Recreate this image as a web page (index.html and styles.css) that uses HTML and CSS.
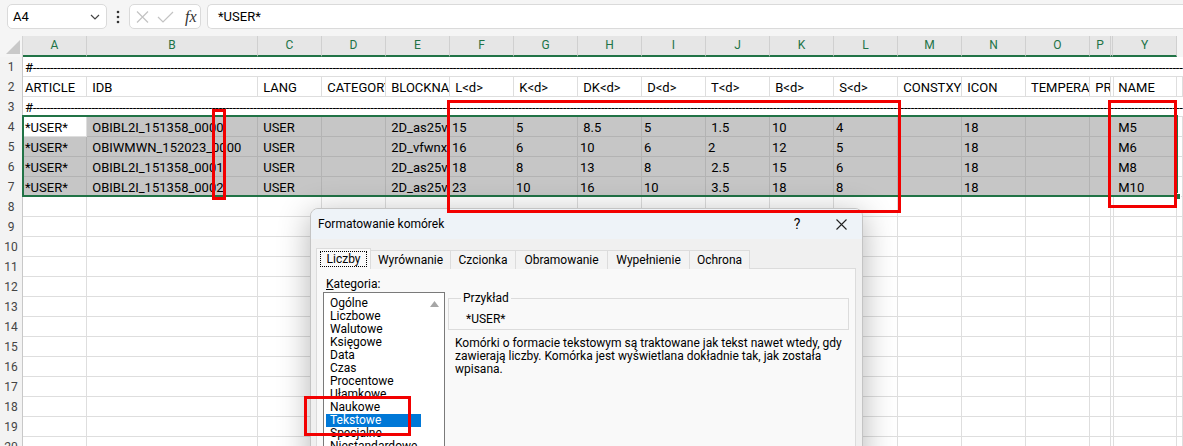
FILE: index.html
```html
<!DOCTYPE html>
<html lang="pl">
<head>
<meta charset="utf-8">
<title>Excel – Formatowanie komórek</title>
<link rel="stylesheet" href="styles.css">
</head>
<body>
<div class="app">
  <div class="fbar">
    <div class="namebox"><span>A4</span>
      <svg class="chev" width="10" height="6" viewBox="0 0 10 6"><polyline points="1,1 5,5 9,1" fill="none" stroke="#444" stroke-width="1.2"/></svg>
    </div>
    <div class="vdots"><svg width="4" height="14" viewBox="0 0 4 14"><circle cx="2" cy="2" r="1.3" fill="#333"/><circle cx="2" cy="7" r="1.3" fill="#333"/><circle cx="2" cy="12" r="1.3" fill="#333"/></svg></div>
    <div class="fxbox">
      <svg width="13" height="12" viewBox="0 0 13 12"><path d="M1 0.5 L12 11.5 M12 0.5 L1 11.5" stroke="#c3c3c3" stroke-width="1.2" fill="none"/></svg>
      <svg width="17" height="12" viewBox="0 0 17 12"><polyline points="1,6 6,11 16,1" stroke="#c3c3c3" stroke-width="1.2" fill="none"/></svg>
      <span class="fx">fx</span>
    </div>
    <div class="finput">*USER*</div>
  </div>

  <div class="sheet">
    <div class="row hdr">
      <div class="corner"><svg width="14" height="14" viewBox="0 0 14 14"><polygon points="14,0 14,14 0,14" fill="#c9c9c9"/></svg></div>
      <div class="ch">A</div><div class="ch">B</div><div class="ch">C</div><div class="ch">D</div><div class="ch">E</div><div class="ch">F</div><div class="ch">G</div><div class="ch">H</div><div class="ch">I</div><div class="ch">J</div><div class="ch">K</div><div class="ch">L</div><div class="ch">M</div><div class="ch">N</div><div class="ch">O</div><div class="ch">P</div><div class="ch gap"></div><div class="ch">Y</div><div class="ch rest"></div>
    </div>

    <div class="row"><div class="rh">1</div><div class="c span">#------------------------------------------------------------------------------------------------------------------------------------------------------------------------------------------------------------------------------------------------------------------------------------------------------------------------------------------------------------------------------------------------------------</div></div>

    <div class="row"><div class="rh">2</div><div class="c">ARTICLE</div><div class="c"> IDB</div><div class="c"> LANG</div><div class="c"> CATEGORY</div><div class="c"> BLOCKNAME</div><div class="c"> L&lt;d&gt;</div><div class="c"> K&lt;d&gt;</div><div class="c"> DK&lt;d&gt;</div><div class="c"> D&lt;d&gt;</div><div class="c"> T&lt;d&gt;</div><div class="c"> B&lt;d&gt;</div><div class="c"> S&lt;d&gt;</div><div class="c"> CONSTXYZ</div><div class="c"> ICON</div><div class="c"> TEMPERATURE</div><div class="c"> PRIORITY</div><div class="c gap"></div><div class="c"> NAME</div><div class="c"></div></div>

    <div class="row"><div class="rh">3</div><div class="c span">#------------------------------------------------------------------------------------------------------------------------------------------------------------------------------------------------------------------------------------------------------------------------------------------------------------------------------------------------------------------------------------------------------------</div></div>

    <div class="row"><div class="rh">4</div><div class="c">*USER*</div><div class="c s"> OBIBL2I_151358_0000</div><div class="c s"> USER</div><div class="c s"></div><div class="c s"> 2D_as25vx</div><div class="c s">15</div><div class="c s">5</div><div class="c s"> 8.5</div><div class="c s">5</div><div class="c s"> 1.5</div><div class="c s">10</div><div class="c s">4</div><div class="c s"></div><div class="c s">18</div><div class="c s"></div><div class="c s"></div><div class="c s gap"></div><div class="c s"> M5</div><div class="c"></div></div>

    <div class="row"><div class="rh">5</div><div class="c s">*USER*</div><div class="c s"> OBIWMWN_152023_0000</div><div class="c s"> USER</div><div class="c s"></div><div class="c s"> 2D_vfwnxq</div><div class="c s">16</div><div class="c s">6</div><div class="c s">10</div><div class="c s">6</div><div class="c s">2</div><div class="c s">12</div><div class="c s">5</div><div class="c s"></div><div class="c s">18</div><div class="c s"></div><div class="c s"></div><div class="c s gap"></div><div class="c s"> M6</div><div class="c"></div></div>

    <div class="row"><div class="rh">6</div><div class="c s">*USER*</div><div class="c s"> OBIBL2I_151358_0001</div><div class="c s"> USER</div><div class="c s"></div><div class="c s"> 2D_as25vx</div><div class="c s">18</div><div class="c s">8</div><div class="c s">13</div><div class="c s">8</div><div class="c s"> 2.5</div><div class="c s">15</div><div class="c s">6</div><div class="c s"></div><div class="c s">18</div><div class="c s"></div><div class="c s"></div><div class="c s gap"></div><div class="c s"> M8</div><div class="c"></div></div>

    <div class="row"><div class="rh">7</div><div class="c s">*USER*</div><div class="c s"> OBIBL2I_151358_0002</div><div class="c s"> USER</div><div class="c s"></div><div class="c s"> 2D_as25vx</div><div class="c s">23</div><div class="c s">10</div><div class="c s">16</div><div class="c s">10</div><div class="c s"> 3.5</div><div class="c s">18</div><div class="c s">8</div><div class="c s"></div><div class="c s">18</div><div class="c s"></div><div class="c s"></div><div class="c s gap"></div><div class="c s"> M10</div><div class="c"></div></div>

    <div class="row"><div class="rh">8</div><div class="c"></div><div class="c"></div><div class="c"></div><div class="c"></div><div class="c"></div><div class="c"></div><div class="c"></div><div class="c"></div><div class="c"></div><div class="c"></div><div class="c"></div><div class="c"></div><div class="c"></div><div class="c"></div><div class="c"></div><div class="c"></div><div class="c gap"></div><div class="c"></div><div class="c"></div></div>
    <div class="row"><div class="rh">9</div><div class="c"></div><div class="c"></div><div class="c"></div><div class="c"></div><div class="c"></div><div class="c"></div><div class="c"></div><div class="c"></div><div class="c"></div><div class="c"></div><div class="c"></div><div class="c"></div><div class="c"></div><div class="c"></div><div class="c"></div><div class="c"></div><div class="c gap"></div><div class="c"></div><div class="c"></div></div>
    <div class="row"><div class="rh">10</div><div class="c"></div><div class="c"></div><div class="c"></div><div class="c"></div><div class="c"></div><div class="c"></div><div class="c"></div><div class="c"></div><div class="c"></div><div class="c"></div><div class="c"></div><div class="c"></div><div class="c"></div><div class="c"></div><div class="c"></div><div class="c"></div><div class="c gap"></div><div class="c"></div><div class="c"></div></div>
    <div class="row"><div class="rh">11</div><div class="c"></div><div class="c"></div><div class="c"></div><div class="c"></div><div class="c"></div><div class="c"></div><div class="c"></div><div class="c"></div><div class="c"></div><div class="c"></div><div class="c"></div><div class="c"></div><div class="c"></div><div class="c"></div><div class="c"></div><div class="c"></div><div class="c gap"></div><div class="c"></div><div class="c"></div></div>
    <div class="row"><div class="rh">12</div><div class="c"></div><div class="c"></div><div class="c"></div><div class="c"></div><div class="c"></div><div class="c"></div><div class="c"></div><div class="c"></div><div class="c"></div><div class="c"></div><div class="c"></div><div class="c"></div><div class="c"></div><div class="c"></div><div class="c"></div><div class="c"></div><div class="c gap"></div><div class="c"></div><div class="c"></div></div>
    <div class="row"><div class="rh">13</div><div class="c"></div><div class="c"></div><div class="c"></div><div class="c"></div><div class="c"></div><div class="c"></div><div class="c"></div><div class="c"></div><div class="c"></div><div class="c"></div><div class="c"></div><div class="c"></div><div class="c"></div><div class="c"></div><div class="c"></div><div class="c"></div><div class="c gap"></div><div class="c"></div><div class="c"></div></div>
    <div class="row"><div class="rh">14</div><div class="c"></div><div class="c"></div><div class="c"></div><div class="c"></div><div class="c"></div><div class="c"></div><div class="c"></div><div class="c"></div><div class="c"></div><div class="c"></div><div class="c"></div><div class="c"></div><div class="c"></div><div class="c"></div><div class="c"></div><div class="c"></div><div class="c gap"></div><div class="c"></div><div class="c"></div></div>
    <div class="row"><div class="rh">15</div><div class="c"></div><div class="c"></div><div class="c"></div><div class="c"></div><div class="c"></div><div class="c"></div><div class="c"></div><div class="c"></div><div class="c"></div><div class="c"></div><div class="c"></div><div class="c"></div><div class="c"></div><div class="c"></div><div class="c"></div><div class="c"></div><div class="c gap"></div><div class="c"></div><div class="c"></div></div>
    <div class="row"><div class="rh">16</div><div class="c"></div><div class="c"></div><div class="c"></div><div class="c"></div><div class="c"></div><div class="c"></div><div class="c"></div><div class="c"></div><div class="c"></div><div class="c"></div><div class="c"></div><div class="c"></div><div class="c"></div><div class="c"></div><div class="c"></div><div class="c"></div><div class="c gap"></div><div class="c"></div><div class="c"></div></div>
    <div class="row"><div class="rh">17</div><div class="c"></div><div class="c"></div><div class="c"></div><div class="c"></div><div class="c"></div><div class="c"></div><div class="c"></div><div class="c"></div><div class="c"></div><div class="c"></div><div class="c"></div><div class="c"></div><div class="c"></div><div class="c"></div><div class="c"></div><div class="c"></div><div class="c gap"></div><div class="c"></div><div class="c"></div></div>
    <div class="row"><div class="rh">18</div><div class="c"></div><div class="c"></div><div class="c"></div><div class="c"></div><div class="c"></div><div class="c"></div><div class="c"></div><div class="c"></div><div class="c"></div><div class="c"></div><div class="c"></div><div class="c"></div><div class="c"></div><div class="c"></div><div class="c"></div><div class="c"></div><div class="c gap"></div><div class="c"></div><div class="c"></div></div>
    <div class="row"><div class="rh">19</div><div class="c"></div><div class="c"></div><div class="c"></div><div class="c"></div><div class="c"></div><div class="c"></div><div class="c"></div><div class="c"></div><div class="c"></div><div class="c"></div><div class="c"></div><div class="c"></div><div class="c"></div><div class="c"></div><div class="c"></div><div class="c"></div><div class="c gap"></div><div class="c"></div><div class="c"></div></div>
    <div class="row"><div class="rh">20</div><div class="c"></div><div class="c"></div><div class="c"></div><div class="c"></div><div class="c"></div><div class="c"></div><div class="c"></div><div class="c"></div><div class="c"></div><div class="c"></div><div class="c"></div><div class="c"></div><div class="c"></div><div class="c"></div><div class="c"></div><div class="c"></div><div class="c gap"></div><div class="c"></div><div class="c"></div></div>
  </div>

  <div class="selection"><div class="handle"></div></div>

  <div class="dialog">
    <div class="dtitle"><span class="dname">Formatowanie komórek</span><span class="help">?</span>
      <svg class="close" width="11" height="11" viewBox="0 0 11 11"><path d="M0.5 0.5 L10.5 10.5 M10.5 0.5 L0.5 10.5" stroke="#222" stroke-width="1.1" fill="none"/></svg>
    </div>
    <div class="tabs">
      <div class="tab active t1"><span class="focus">Liczby</span></div>
      <div class="tab t2">Wyrównanie</div>
      <div class="tab t3">Czcionka</div>
      <div class="tab t4">Obramowanie</div>
      <div class="tab t5">Wypełnienie</div>
      <div class="tab t6">Ochrona</div>
    </div>
    <div class="panel">
      <div class="leftcol">
        <div class="klabel"><u>K</u>ategoria:</div>
        <div class="listbox">
          <div class="items">
            <div class="item">Ogólne</div>
            <div class="item">Liczbowe</div>
            <div class="item">Walutowe</div>
            <div class="item">Księgowe</div>
            <div class="item">Data</div>
            <div class="item">Czas</div>
            <div class="item">Procentowe</div>
            <div class="item">Ułamkowe</div>
            <div class="item">Naukowe</div>
            <div class="item sel">Tekstowe</div>
            <div class="item">Specjalne</div>
            <div class="item">Niestandardowe</div>
          </div>
          <div class="scroll"><svg width="9" height="6" viewBox="0 0 9 6"><polygon points="4.5,0 9,6 0,6" fill="#a6a6a6"/></svg></div>
        </div>
      </div>
      <div class="rightcol">
        <fieldset class="sample">
          <legend>Przykład</legend>
          <div class="sampletext">*USER*</div>
        </fieldset>
        <p class="desc">Komórki o formacie tekstowym są traktowane jak tekst nawet wtedy, gdy zawierają liczby. Komórka jest wyświetlana dokładnie tak, jak została wpisana.</p>
      </div>
    </div>
  </div>

  <div class="mark m1"></div>
  <div class="mark m2"></div>
  <div class="mark m3"></div>
  <div class="mark m4"></div>
</div>
</body>
</html>
```
FILE: styles.css
```css
* { box-sizing: border-box; }
html, body { margin: 0; padding: 0; overflow: hidden; }
body { width: 1183px; height: 446px; background: #fff; font-family: Roboto, "Liberation Sans", sans-serif; color: #000; }
.app { position: relative; width: 1183px; height: 446px; overflow: hidden; }

/* formula bar */
.fbar { height: 36px; background: #f5f5f5; display: flex; align-items: flex-start; padding: 4px 0 0 7px; }
.namebox { width: 100px; height: 25px; background: #fff; border: 1px solid #dadada; border-radius: 5px; display: flex; align-items: center; justify-content: space-between; padding: 0 6px 0 5px; font-size: 13px; }
.vdots { width: 22px; height: 25px; display: flex; align-items: center; justify-content: center; }
.fxbox { width: 72px; height: 25px; background: #fff; border: 1px solid #dadada; border-radius: 5px; display: flex; align-items: center; padding: 0 0 0 6px; gap: 8px; margin-right: 6px; }
.fx { font-family: "Liberation Serif", serif; font-style: italic; font-size: 16px; color: #333; margin-left: 3px; }
.finput { flex: 1; height: 25px; background: #fff; border: 1px solid #dadada; border-right: none; border-radius: 5px 0 0 5px; padding-left: 10px; font-size: 13px; line-height: 23px; }

/* sheet */
.sheet { --cols: 23px 64px 171px 64px 64px 64px 64px 64px 64px 64px 64px 64px 64px 64px 64px 64px 21px 2px 64px 1fr; }
.row { display: grid; grid-template-columns: var(--cols); height: 20px; }
.row.hdr { height: 21px; background: #f5f5f5; }
.corner { display: flex; align-items: flex-end; justify-content: flex-end; padding: 0 2px 3px 0; border-right: 1px solid #d4d4d4; }
.ch { background: #e6e6e6; border-right: 1px solid #d0d0d0; border-bottom: 2px solid #217346; color: #217346; font-size: 12px; text-align: center; line-height: 19px; }
.ch.rest { background: #f5f5f5; border-bottom: none; border-right: none; }
.ch.gap { background: #e6e6e6; }
.rh { background: #f3f3f3; border-right: 1px solid #c8c8c8; color: #444; font-size: 12px; text-align: center; line-height: 20px; }
.c { border-right: 1px solid #dedede; border-bottom: 1px solid #dedede; font-size: 13px; line-height: 19px; padding: 1px 0 0 2px; white-space: pre; overflow: hidden; }
.c.span { grid-column: 2 / -1; border-right: none; letter-spacing: -0.15px; }
.c.s { background: #c6c6c6; border-color: #b3b3b3; }

.selection { position: absolute; left: 22px; top: 115px; width: 1156px; height: 82px; border: 2px solid #217346; }
.handle { position: absolute; right: -5px; bottom: -5px; width: 7px; height: 7px; background: #217346; border: 1px solid #fff; }

/* dialog */
.dialog { position: absolute; left: 310px; top: 208px; width: 553px; height: 260px; background: #f0f0f0; border: 1px solid #c4c4c4; border-radius: 8px 8px 0 0; box-shadow: 0 6px 32px rgba(0, 0, 0, 0.3); font-size: 12px; overflow: hidden; }
.dtitle { height: 30px; background: #eef3f8; display: flex; align-items: center; padding: 0 15px 0 7px; }
.dname { flex: 1; }
.help { width: 20px; text-align: center; font-size: 14px; margin-right: 29px; }
.tabs { display: flex; margin: 11px 0 0 5px; height: 19px; }
.tab { height: 19px; border: 1px solid #dcdcdc; border-bottom: none; margin-left: -1px; background: #f3f3f3; line-height: 18px; text-align: center; }
.tab.active { background: #f9f9f9; height: 21px; margin-top: -2px; margin-left: 0; position: relative; z-index: 1; display: flex; align-items: center; justify-content: center; }
.focus { border: 1px dotted #000; padding: 0 6px; line-height: 14px; }
.t1 { width: 55px; } .t2 { width: 81px; } .t3 { width: 66px; } .t4 { width: 93px; } .t5 { width: 83px; } .t6 { width: 61px; }
.panel { margin-left: 5px; margin-top: -1px; width: 540px; height: 200px; background: #f9f9f9; border: 1px solid #dcdcdc; display: flex; padding: 10px 0 0 6px; }
.leftcol { width: 122px; }
.klabel { line-height: 13px; padding-left: 3px; margin-top: -1px; }
.listbox { height: 170px; margin-top: 1px; background: #fff; border: 1px solid #7a7a7a; display: flex; padding-top: 4px; }
.items { width: 101px; }
.item { margin-left: 2px; width: 95px; padding-left: 4px; line-height: 13px; white-space: nowrap; }
.item.sel { background: #0078d7; color: #fff; }
.scroll { flex: 1; display: flex; justify-content: center; padding-top: 4px; }
.rightcol { margin-left: 3px; width: 401px; padding-top: 12px; }
.sample { margin: 0; padding: 0 0 3px 0; border: 1px solid #dcdcdc; height: 39px; min-width: 0; }
.sample legend { margin-left: 12px; padding: 0 2px; line-height: 14px; }
.sampletext { padding: 8px 0 0 17px; line-height: 13px; }
.desc { margin: 7px 0 0 7px; width: 390px; line-height: 13px; }

/* red annotations */
.mark { position: absolute; border: 3px solid #f20000; z-index: 5; }
.m1 { left: 212px; top: 109px; width: 14px; height: 91px; }
.m2 { left: 447px; top: 100px; width: 454px; height: 113px; }
.m3 { left: 1108px; top: 100px; width: 69px; height: 108px; }
.m4 { left: 304px; top: 396px; width: 107px; height: 40px; }
```
